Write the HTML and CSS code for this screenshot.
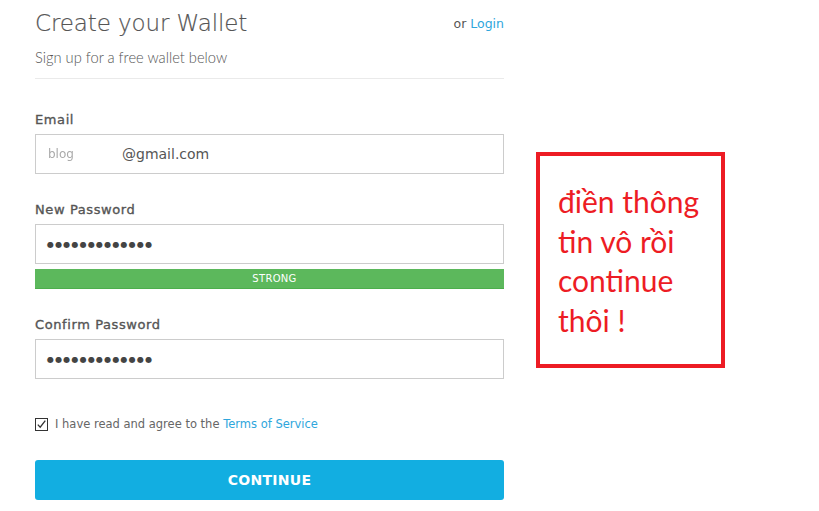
FILE: index.html
```html
<!DOCTYPE html>
<html>
<head>
<meta charset="utf-8">
<link rel="stylesheet" href="styles.css">
</head>
<body>
<div class="page">
  <form class="wallet">
    <div class="head">
      <h1 class="title">Create your Wallet</h1>
      <div class="login">or <a href="#">Login</a></div>
    </div>
    <p class="subtitle">Sign up for a free wallet below</p>
    <hr class="divider">
    <label class="label first">Email</label>
    <div class="input"><span class="blur">blog</span><span class="mail">@gmail.com</span></div>
    <label class="label">New Password</label>
    <div class="input dots">●●●●●●●●●●●●●</div>
    <div class="strength">STRONG</div>
    <label class="label">Confirm Password</label>
    <div class="input dots">●●●●●●●●●●●●●</div>
    <div class="agree">
      <span class="check"><svg width="13" height="13" viewBox="0 0 13 13"><rect x="0.5" y="0.5" width="12" height="12" fill="#fff" stroke="#333"/><path d="M2.8 6.6 L5.2 9.2 L10.3 2.6" fill="none" stroke="#333" stroke-width="1.3"/></svg></span>
      <span>I have read and agree to the <a href="#">Terms of Service</a></span>
    </div>
    <div class="button">CONTINUE</div>
  </form>
  <div class="note">điền thông tin vô rồi continue thôi !</div>
</div>
</body>
</html>
```
FILE: styles.css
```css
html, body { margin: 0; padding: 0; background: #fff; }
body { font-family: "DejaVu Sans", sans-serif; color: #555; width: 819px; height: 511px; overflow: hidden; }
.page { display: flex; align-items: flex-start; padding-left: 35px; }
.wallet { width: 469px; display: flex; flex-direction: column; }
.head { display: flex; justify-content: space-between; align-items: flex-end; margin-top: 7px; height: 32px; }
.title { margin: 0; font-family: "DejaVu Sans", sans-serif; font-weight: 200; font-size: 23px; line-height: 32px; color: #555; letter-spacing: -0.1px; -webkit-text-stroke: 0.2px #555; }
.login { font-family: "DejaVu Sans", sans-serif; font-size: 12.5px; color: #555; margin-bottom: 8px; }
a { color: #2ea6dc; text-decoration: none; }
.subtitle { margin: 8px 0 0; font-family: "Lato", sans-serif; font-weight: 300; font-size: 14.7px; line-height: 20px; color: #555; }
.divider { border: 0; border-top: 1px solid #eaeaea; margin: 11px 0 0; width: 100%; height: 0; }
.label { display: block; font-size: 13px; font-weight: normal; letter-spacing: 0.6px; -webkit-text-stroke: 0.35px #555; color: #555; margin-top: 27px; padding-top: 1px; line-height: 16px; font-family: "DejaVu Sans", sans-serif; }
.label.first { margin-top: 32px; }
.input { box-sizing: border-box; height: 40px; border: 1px solid #ccc; margin-top: 6px; display: flex; align-items: center; padding-left: 12px; font-size: 14px; color: #444; }
.blur { color: #aaa; filter: blur(0.6px); font-size: 12px; width: 74px; }
.mail { color: #555; }
.dots { font-size: 8px; letter-spacing: 1.2px; color: #444; padding-left: 11px; }
.strength { margin-top: 5px; height: 20px; background: #5cb85c; border-bottom: 1px solid #4cae4c; box-sizing: border-box; color: #fff; font-size: 10px; letter-spacing: 0.3px; text-align: center; line-height: 20px; padding-left: 10px; }
.agree { display: flex; align-items: center; gap: 7px; margin-top: 37px; height: 16px; font-size: 11.5px; color: #666; }
.check { display: flex; }
.button { margin-top: 28px; height: 40px; border-radius: 3px; background: #12aee1; color: #fff; font-weight: bold; font-size: 14px; display: flex; align-items: center; justify-content: center; letter-spacing: 0.3px; }
.note { margin-left: 32px; margin-top: 152px; width: 189px; height: 216px; box-sizing: border-box; border: 4px solid #ed1c24; padding: 26px 8px 0 18px; font-family: "Lato", sans-serif; font-size: 30px; line-height: 39.5px; color: #ed1c24; }
```
